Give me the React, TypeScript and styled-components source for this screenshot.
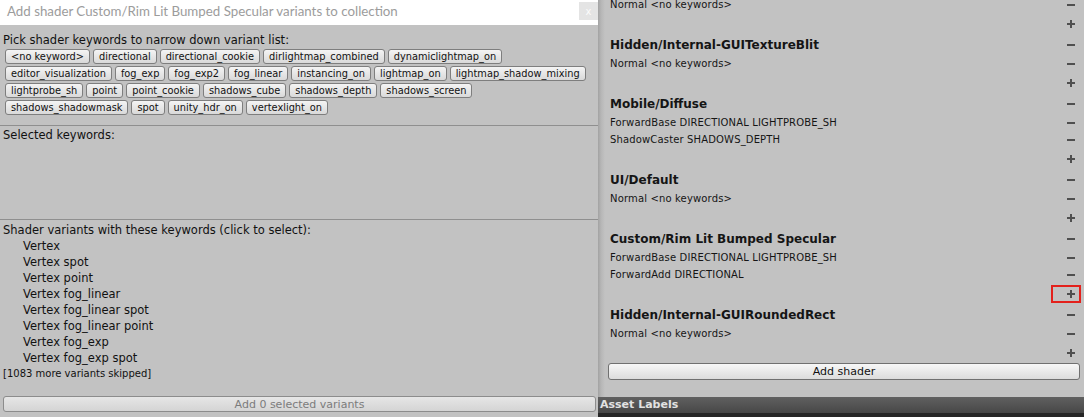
import React from 'react';
import styled, { createGlobalStyle } from 'styled-components';

const GlobalStyle = createGlobalStyle`
  html, body { margin: 0; padding: 0; background: #c2c2c2; overflow: hidden; }
  #root { width: 1084px; height: 417px; }
  * { box-sizing: border-box; }
`;

const Screen = styled.div`
  display: grid;
  grid-template-columns: 598px 486px;
  width: 1084px;
  height: 417px;
  overflow: hidden;
  background: #c2c2c2;
  color: #111;
  font-family: "DejaVu Sans", Verdana, sans-serif;
`;

/* ---------- left: dialog ---------- */
const Dialog = styled.div`
  display: flex;
  flex-direction: column;
  height: 417px;
  background: #c2c2c2;
`;

const TitleBar = styled.div`
  display: flex;
  justify-content: space-between;
  align-items: flex-start;
  height: 25px;
  background: #ffffff;
`;

const TitleText = styled.div`
  padding-left: 7px;
  font-family: Lato, "Open Sans", sans-serif;
  font-size: 13.3px;
  line-height: 22px;
  color: #9c9c9c;
  white-space: nowrap;
`;

const CloseButton = styled.div`
  width: 19px;
  height: 18px;
  margin-top: 2px;
  display: flex;
  align-items: center;
  justify-content: center;
  background: #e4e4e4;
  color: #fbfbfb;
  font-size: 10px;
`;

const Section = styled.div<{ $h?: number }>`
  padding: 0 2px 0 3px;
  ${(p) => (p.$h ? `height: ${p.$h}px; flex: none;` : 'flex: 1;')}
`;

const Label = styled.div<{ $top?: number }>`
  font-size: 11.5px;
  line-height: 16px;
  padding-top: ${(p) => p.$top ?? 0}px;
  white-space: nowrap;
`;

const KeywordGrid = styled.div`
  display: flex;
  flex-direction: column;
  gap: 2px;
  margin: 1px 0 0 2px;
`;

const KeywordRow = styled.div`
  display: flex;
  gap: 3px;
`;

const KeywordButton = styled.div`
  height: 15px;
  padding: 0 5px;
  border: 1px solid #7e7e7e;
  border-radius: 3px;
  background: linear-gradient(#f4f4f4, #d9d9d9);
  font-size: 9.8px;
  line-height: 13px;
  color: #111;
  white-space: nowrap;
`;

const Divider = styled.div`
  height: 1px;
  flex: none;
  background: #8f8f8f;
`;

const VariantItem = styled.div`
  padding-left: 20px;
  font-size: 11.5px;
  line-height: 16px;
  white-space: nowrap;
`;

const SkippedNote = styled.div`
  font-size: 10px;
  line-height: 16px;
  white-space: nowrap;
`;

const Footer = styled.div`
  flex: none;
  padding: 0 2px 5px 3px;
`;

const WideButton = styled.div<{ $disabled?: boolean }>`
  height: ${(p) => (p.$disabled ? 16 : 17)}px;
  display: flex;
  align-items: center;
  justify-content: center;
  border: 1px solid ${(p) => (p.$disabled ? '#8c8c8c' : '#707070')};
  border-radius: 3px;
  background: ${(p) =>
    p.$disabled ? 'linear-gradient(#e6e6e6, #d4d4d4)' : 'linear-gradient(#f7f7f7, #dcdcdc)'};
  color: ${(p) => (p.$disabled ? '#7c7c7c' : '#111')};
  font-size: 11px;
  white-space: nowrap;
`;

/* ---------- right: inspector ---------- */
const Inspector = styled.div`
  display: flex;
  flex-direction: column;
  height: 417px;
  background: linear-gradient(to right, #a2a2a2 0px, #b6b6b6 3px, #c2c2c2 7px);
`;

const ListArea = styled.div`
  flex: 1;
  overflow: hidden;
  padding: 0 3px 0 12px;
`;

const List = styled.div`
  display: flex;
  flex-direction: column;
  margin-top: -4px;
`;

const Row = styled.div<{ $kind: 'header' | 'variant' | 'plus' }>`
  display: flex;
  align-items: center;
  justify-content: space-between;
  height: ${(p) => (p.$kind === 'variant' ? 17 : 21)}px;
  font-size: ${(p) => (p.$kind === 'header' ? 12 : 10)}px;
  font-weight: ${(p) => (p.$kind === 'header' ? 700 : 400)};
  letter-spacing: ${(p) => (p.$kind === 'variant' ? '0.15px' : '0')};
  color: #151515;
  white-space: nowrap;
`;

const IconSlot = styled.div<{ $marked?: boolean }>`
  width: 30px;
  height: 18px;
  display: flex;
  align-items: center;
  justify-content: flex-end;
  padding-right: 4px;
  border: 2px solid ${(p) => (p.$marked ? '#e3211c' : 'transparent')};
  color: #4f4f4f;
`;

const AddShaderWrap = styled.div`
  margin: 0 1px 0 -2px;
`;

const AssetBar = styled.div`
  flex: none;
  height: 16px;
  padding-left: 2px;
  background: linear-gradient(#606060, #474747);
  color: #e2e2e2;
  font-size: 11px;
  font-weight: 700;
  line-height: 16px;
`;

const BottomStrip = styled.div`
  flex: none;
  height: 4px;
  background: #262626;
`;

const MinusIcon = () => (
  <svg width="8" height="8" viewBox="0 0 8 8">
    <rect x="0" y="3" width="8" height="2" fill="currentColor" />
  </svg>
);

const PlusIcon = () => (
  <svg width="8" height="8" viewBox="0 0 8 8">
    <rect x="0" y="3" width="8" height="2" fill="currentColor" />
    <rect x="3" y="0" width="2" height="8" fill="currentColor" />
  </svg>
);

const keywordRows = [
  ['<no keyword>', 'directional', 'directional_cookie', 'dirlightmap_combined', 'dynamiclightmap_on'],
  ['editor_visualization', 'fog_exp', 'fog_exp2', 'fog_linear', 'instancing_on', 'lightmap_on', 'lightmap_shadow_mixing'],
  ['lightprobe_sh', 'point', 'point_cookie', 'shadows_cube', 'shadows_depth', 'shadows_screen'],
  ['shadows_shadowmask', 'spot', 'unity_hdr_on', 'vertexlight_on'],
];

const variants = [
  'Vertex',
  'Vertex spot',
  'Vertex point',
  'Vertex fog_linear',
  'Vertex fog_linear spot',
  'Vertex fog_linear point',
  'Vertex fog_exp',
  'Vertex fog_exp spot',
];

type ShaderEntry = { name?: string; variants: string[]; marked?: boolean };

const shaders: ShaderEntry[] = [
  { variants: ['Normal <no keywords>'] },
  { name: 'Hidden/Internal-GUITextureBlit', variants: ['Normal <no keywords>'] },
  { name: 'Mobile/Diffuse', variants: ['ForwardBase DIRECTIONAL LIGHTPROBE_SH', 'ShadowCaster SHADOWS_DEPTH'] },
  { name: 'UI/Default', variants: ['Normal <no keywords>'] },
  {
    name: 'Custom/Rim Lit Bumped Specular',
    variants: ['ForwardBase DIRECTIONAL LIGHTPROBE_SH', 'ForwardAdd DIRECTIONAL'],
    marked: true,
  },
  { name: 'Hidden/Internal-GUIRoundedRect', variants: ['Normal <no keywords>'] },
];

export default function App() {
  return (
    <>
      <GlobalStyle />
      <Screen>
        <Dialog>
          <TitleBar>
            <TitleText>Add shader Custom/Rim Lit Bumped Specular variants to collection</TitleText>
            <CloseButton>x</CloseButton>
          </TitleBar>
          <Section $h={100}>
            <Label $top={7}>Pick shader keywords to narrow down variant list:</Label>
            <KeywordGrid>
              {keywordRows.map((row, i) => (
                <KeywordRow key={i}>
                  {row.map((k) => (
                    <KeywordButton key={k}>{k}</KeywordButton>
                  ))}
                </KeywordRow>
              ))}
            </KeywordGrid>
          </Section>
          <Divider />
          <Section $h={93}>
            <Label $top={1}>Selected keywords:</Label>
          </Section>
          <Divider />
          <Section>
            <Label $top={2}>Shader variants with these keywords (click to select):</Label>
            {variants.map((v) => (
              <VariantItem key={v}>{v}</VariantItem>
            ))}
            <SkippedNote>[1083 more variants skipped]</SkippedNote>
          </Section>
          <Footer>
            <WideButton $disabled>Add 0 selected variants</WideButton>
          </Footer>
        </Dialog>

        <Inspector>
          <ListArea>
            <List>
              {shaders.map((s, i) => (
                <React.Fragment key={i}>
                  {s.name && (
                    <Row $kind="header">
                      <span>{s.name}</span>
                      <IconSlot>
                        <MinusIcon />
                      </IconSlot>
                    </Row>
                  )}
                  {s.variants.map((v, j) => (
                    <Row $kind="variant" key={j}>
                      <span>{v}</span>
                      <IconSlot>
                        <MinusIcon />
                      </IconSlot>
                    </Row>
                  ))}
                  <Row $kind="plus">
                    <span />
                    <IconSlot $marked={s.marked}>
                      <PlusIcon />
                    </IconSlot>
                  </Row>
                </React.Fragment>
              ))}
              <AddShaderWrap>
                <WideButton>Add shader</WideButton>
              </AddShaderWrap>
            </List>
          </ListArea>
          <AssetBar>Asset Labels</AssetBar>
          <BottomStrip />
        </Inspector>
      </Screen>
    </>
  );
}
